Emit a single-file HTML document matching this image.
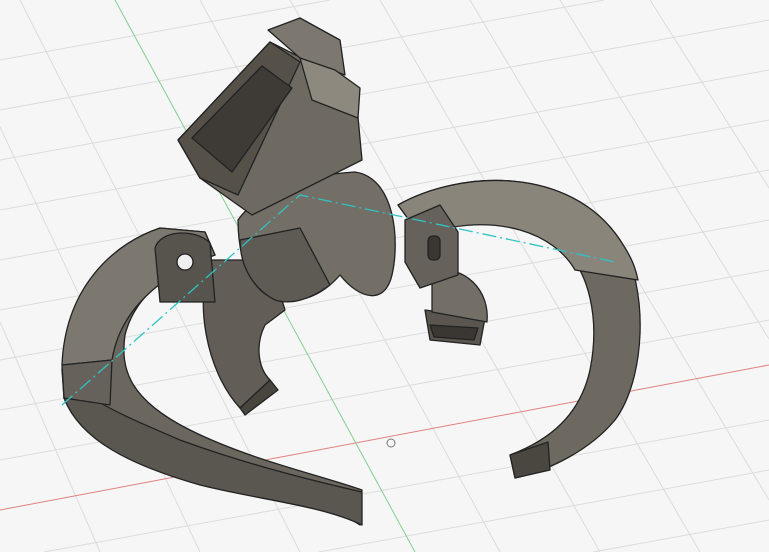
<!DOCTYPE html>
<html><head><meta charset="utf-8"><style>
html,body{margin:0;padding:0;width:769px;height:552px;overflow:hidden;background:#f6f6f6}
svg{display:block}
</style></head><body>
<svg width="769" height="552" viewBox="0 0 769 552" xmlns="http://www.w3.org/2000/svg">
<rect width="769" height="552" fill="#f6f6f6"/>
<g stroke="#dcdcdc" stroke-width="1">
<line x1="0" y1="60" x2="330" y2="0"/><line x1="0" y1="110" x2="604" y2="0"/>
<line x1="0" y1="160" x2="769" y2="20"/><line x1="0" y1="210" x2="769" y2="70"/>
<line x1="0" y1="260" x2="769" y2="120"/><line x1="0" y1="310" x2="769" y2="170"/>
<line x1="0" y1="360" x2="769" y2="220"/><line x1="0" y1="410" x2="769" y2="270"/>
<line x1="0" y1="460" x2="769" y2="320"/><line x1="44" y1="552" x2="769" y2="420"/>
<line x1="319" y1="552" x2="769" y2="470"/><line x1="593" y1="552" x2="769" y2="520"/>
<line x1="20" y1="0" x2="300" y2="552"/><line x1="0" y1="127" x2="200" y2="552"/>
<line x1="200" y1="0" x2="500" y2="552"/><line x1="290" y1="0" x2="600" y2="552"/>
<line x1="380" y1="0" x2="700" y2="552"/><line x1="470" y1="0" x2="769" y2="500"/>
<line x1="560" y1="0" x2="769" y2="339"/><line x1="650" y1="0" x2="769" y2="188"/>
<line x1="0" y1="322" x2="100" y2="552"/>
</g>
<line x1="0" y1="510" x2="769" y2="365" stroke="#e08080" stroke-width="1"/>
<line x1="115" y1="0" x2="415" y2="552" stroke="#80d090" stroke-width="1"/>
<circle cx="391" cy="443" r="4" fill="none" stroke="#777"/>
<g stroke="#222" stroke-width="1.3" stroke-linejoin="round">
<path d="M398,205 C460,170 570,165 620,240 C650,290 645,380 615,420 C590,450 550,470 515,478 L510,455 C550,440 580,415 590,370 C600,320 590,270 560,245 C520,215 460,215 420,235 Z" fill="#6d6960"/>
<path d="M398,205 C460,170 570,165 620,240 C630,255 635,265 638,280 L575,270 C555,235 500,210 420,235 Z" fill="#8a857b"/>
<path d="M510,455 L548,442 L550,470 L515,478 Z" fill="#4a4741"/>
<path d="M160,228 C110,245 65,290 62,370 L64,398 C80,440 150,470 240,490 C290,500 330,505 360,525 L362,490 C320,475 250,460 190,430 C130,400 120,370 125,335 C135,295 170,270 215,255 L205,232 Z" fill="#6b675f"/>
<path d="M64,365 C75,395 110,410 180,440 C240,462 300,478 362,492 L362,525 C320,505 260,500 200,485 C130,465 80,440 64,398 Z" fill="#5a5650"/>
<path d="M160,228 C110,245 65,290 62,365 L112,360 C120,310 160,275 215,255 L205,232 Z" fill="#7d786f"/>
<path d="M62,365 L112,360 L110,405 L64,398 Z" fill="#66625b"/>
<path d="M210,260 C195,300 205,370 240,408 L270,380 C258,368 255,345 265,325 L285,310 L270,260 Z" fill="#625e57"/>
<path d="M240,408 L270,380 L278,390 L245,415 Z" fill="#48453f"/>
<path d="M425,310 L485,318 L480,345 L430,340 Z" fill="#5a564f"/>
<path d="M430,325 L478,328 L474,340 L434,337 Z" fill="#3a3733"/>
<path d="M432,270 C465,265 490,290 487,322 L432,312 Z" fill="#736f67"/>
<path d="M238,220 C255,195 300,175 355,172 C395,178 400,240 392,275 C385,305 360,300 340,275 C320,298 300,302 280,300 C255,296 238,265 238,220 Z" fill="#736e66"/>
<path d="M240,240 L300,228 L330,285 C310,300 290,305 275,300 C255,290 240,268 240,240 Z" fill="#5e5a54"/>
<path d="M155,248 C160,230 195,228 210,243 L215,302 L160,302 Z" fill="#57534d"/>
<circle cx="185" cy="262" r="8" fill="#f0f0f0" stroke="#222"/>
<path d="M405,220 L440,205 L458,232 L458,275 L420,288 L405,262 Z" fill="#66625b"/>
<rect x="428" y="236" width="12" height="24" rx="5" fill="#3a3733"/>
<path d="M178,140 L270,42 L355,85 L362,160 L252,215 L200,178 Z" fill="#6e6a62"/>
<path d="M178,140 L270,42 L300,62 L238,195 L200,178 Z" fill="#555149"/>
<path d="M192,138 L262,66 L292,88 L232,172 Z" fill="#3e3b37"/>
<path d="M268,30 L300,18 L340,40 L345,75 L300,58 Z" fill="#7d786f"/>
<path d="M300,58 L335,70 L360,88 L358,118 L312,100 Z" fill="#8e897f"/>
</g>
<polyline points="62,405 300,195 615,262" fill="none" stroke="#2fc4c4" stroke-width="1.3" stroke-dasharray="14,4,2,4"/>
</svg>
</body></html>
